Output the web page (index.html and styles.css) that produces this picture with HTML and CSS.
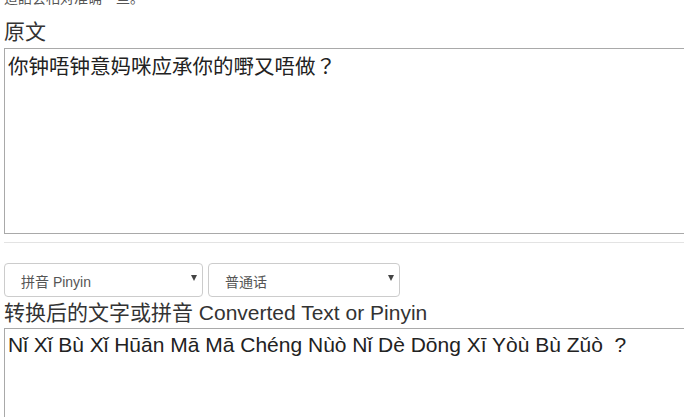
FILE: index.html
```html
<!DOCTYPE html>
<html lang="zh">
<head>
<meta charset="utf-8">
<link rel="stylesheet" href="styles.css">
</head>
<body>
<div class="page">
  <p class="note">這話会相对准确一些。</p>
  <label class="label label-src">原文</label>
  <textarea class="box box-src" lang="ja">你钟唔钟意妈咪应承你的嘢又唔做？</textarea>
  <hr class="rule">
  <div class="selects">
    <div class="select select-a"><span>拼音 Pinyin</span><i class="arrow"></i></div>
    <div class="select select-b"><span>普通话</span><i class="arrow"></i></div>
  </div>
  <label class="label label-out">转换后的文字或拼音 Converted Text or Pinyin</label>
  <textarea class="box box-out">Nǐ Xǐ Bù Xǐ Hūān Mā Mā Chéng Nùò Nǐ Dè Dōng Xī Yòù Bù Zǔò  ?</textarea>
</div>
</body>
</html>
```
FILE: styles.css
```css
html, body {
  margin: 0;
  padding: 0;
  background: #fff;
  overflow: hidden;
}
body {
  font-family: "Liberation Sans", "Noto Sans CJK SC", sans-serif;
  color: #333;
}
.page {
  padding-left: 4px;
  width: 740px;
}
.note {
  margin: -12px 0 0 0;
  font-size: 14px;
  line-height: 20px;
  color: #555;
}
.label {
  display: block;
  font-size: 21px;
  line-height: 24px;
  color: #333;
}
.label-src {
  margin-top: 12px;
  margin-bottom: 4px;
}
.box {
  display: block;
  box-sizing: border-box;
  width: 720px;
  margin: 0;
  border: 1px solid #a9a9a9;
  border-radius: 0;
  padding: 4px 3px;
  font-family: "Liberation Sans", "Noto Sans CJK SC", sans-serif;
  font-size: 21px;
  line-height: 24px;
  color: #222;
  resize: none;
  outline: none;
}
.box-src {
  height: 186px;
  font-family: "Noto Sans CJK JP", "Noto Sans CJK SC", sans-serif;
  font-size: 20.5px;
}
.box-out {
  height: 120px;
}
.rule {
  margin: 8px 0 0 0;
  border: 0;
  border-top: 1px solid #e3e3e3;
  width: 720px;
}
.selects {
  display: flex;
  gap: 5px;
  margin-top: 20px;
}
.select {
  box-sizing: border-box;
  height: 34px;
  border: 1px solid #ccc;
  border-radius: 4px;
  display: flex;
  align-items: center;
  justify-content: space-between;
  padding: 2px 5px 0 16px;
  font-size: 14px;
  color: #555;
}
.select-a { width: 199px; }
.select-b { width: 192px; }
.arrow {
  width: 0;
  height: 0;
  border-left: 3px solid transparent;
  border-right: 3px solid transparent;
  border-top: 6px solid #444;
  margin-top: -6px;
}
.label-out {
  margin-top: 4px;
  margin-bottom: 3px;
}
```
